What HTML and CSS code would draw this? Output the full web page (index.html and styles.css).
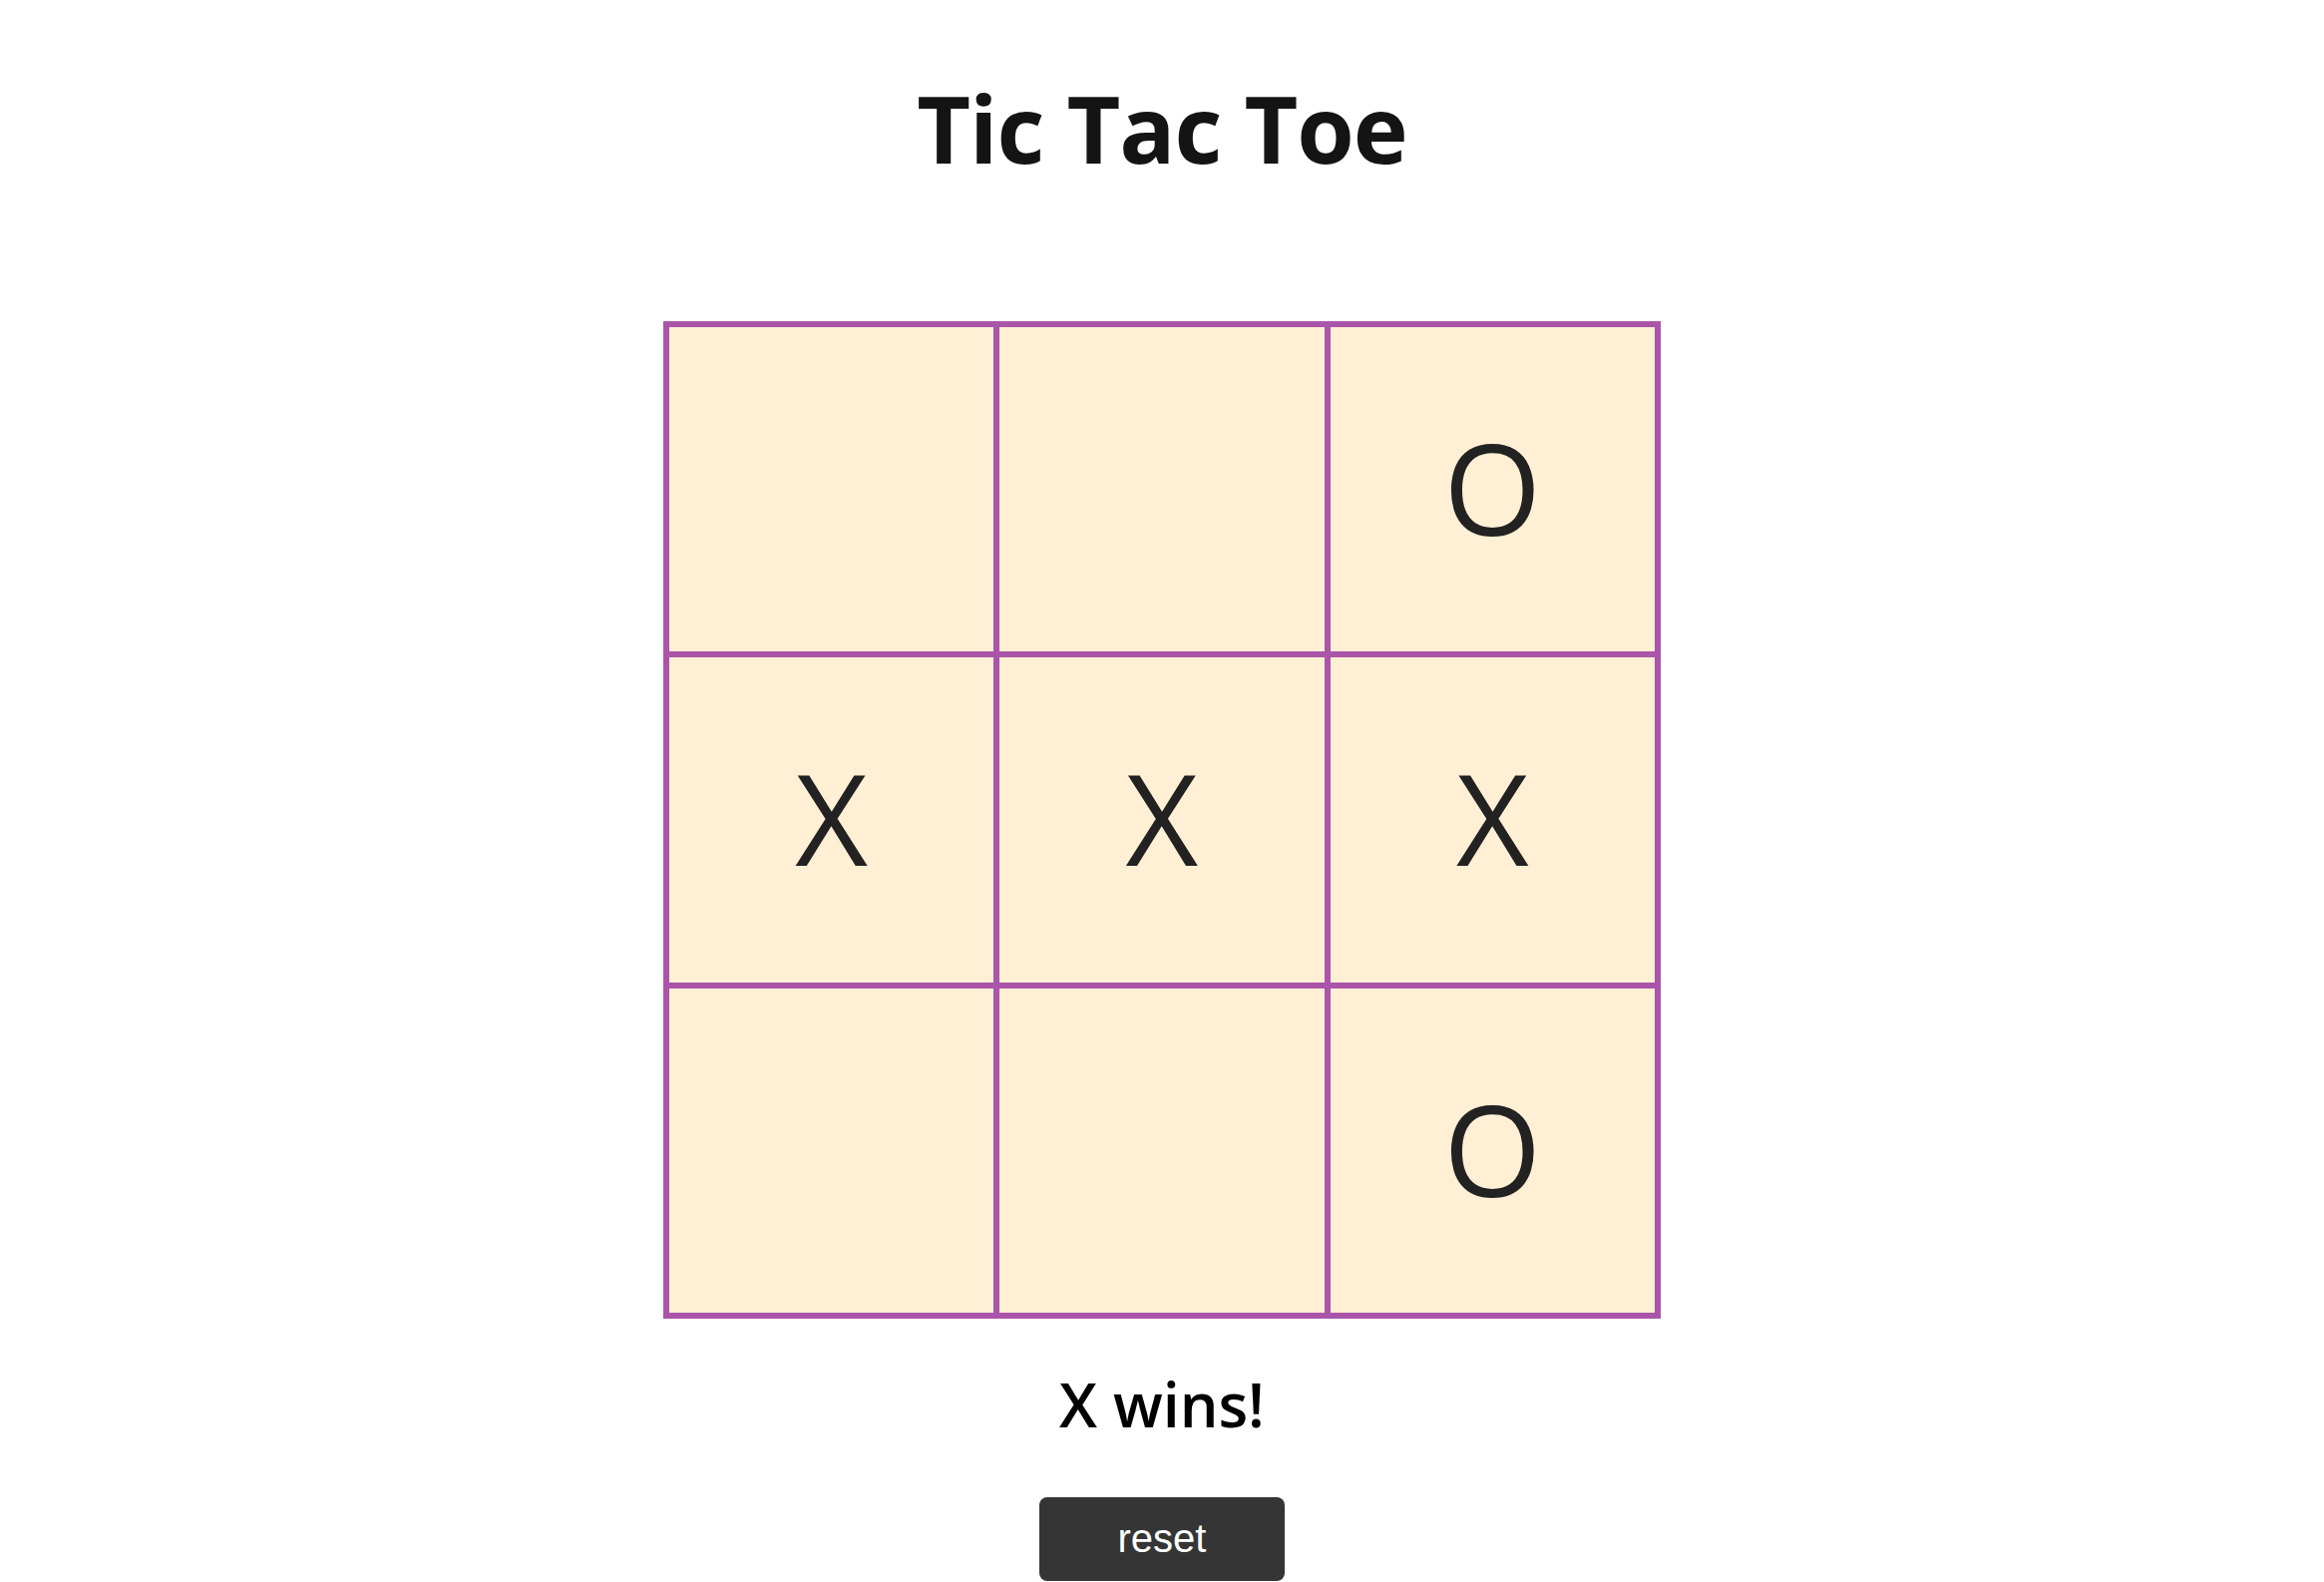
FILE: index.html
```html
<!DOCTYPE html>
<html lang="en">
<head>
    <meta charset="UTF-8">
    <meta name="viewport" content="width=device-width, initial-scale=1.0">
    <title>Tic Tac Toe</title>
    <link rel="stylesheet" href="styles.css">
</head>
<body>
    <main class="game">
        <h1 class="title">Tic Tac Toe</h1>
        <div class="board">
            <button class="cell"></button>
            <button class="cell"></button>
            <button class="cell">O</button>
            <button class="cell">X</button>
            <button class="cell">X</button>
            <button class="cell">X</button>
            <button class="cell"></button>
            <button class="cell"></button>
            <button class="cell">O</button>
        </div>
        <p class="status">X wins!</p>
        <button class="reset">reset</button>
    </main>
</body>
</html>
```

FILE: styles.css
```css
html, body {
    margin: 0;
    padding: 0;
    background: #ffffff;
}
.game {
    display: flex;
    flex-direction: column;
    align-items: center;
    font-family: "Open Sans", "Noto Sans", sans-serif;
}
.title {
    margin: 82px 0 0;
    font-size: 93px;
    font-weight: 700;
    line-height: 1;
    color: #141414;
    letter-spacing: -1px;
}
.board {
    margin-top: 147px;
    width: 1000px;
    height: 1000px;
    box-sizing: border-box;
    display: grid;
    grid-template-columns: repeat(3, 1fr);
    grid-template-rows: repeat(3, 1fr);
    border: 3px solid #aa55aa;
}
.cell {
    display: flex;
    align-items: center;
    justify-content: center;
    margin: 0;
    padding: 0 0 5px;
    border: 3px solid #aa55aa;
    background: #ffefd5;
    font-family: "Open Sans", "Noto Sans", sans-serif;
    font-size: 126px;
    font-weight: 400;
    color: #222222;
}
.status {
    margin: 55px 0 0;
    font-size: 61px;
    font-weight: 600;
    line-height: 1;
    color: #000000;
}
.reset {
    margin-top: 63px;
    width: 246px;
    padding: 19px 0 20px;
    border: none;
    border-radius: 8px;
    background: #353535;
    color: #ffffff;
    font-family: "Liberation Sans", Arial, sans-serif;
    font-size: 40px;
}
```
